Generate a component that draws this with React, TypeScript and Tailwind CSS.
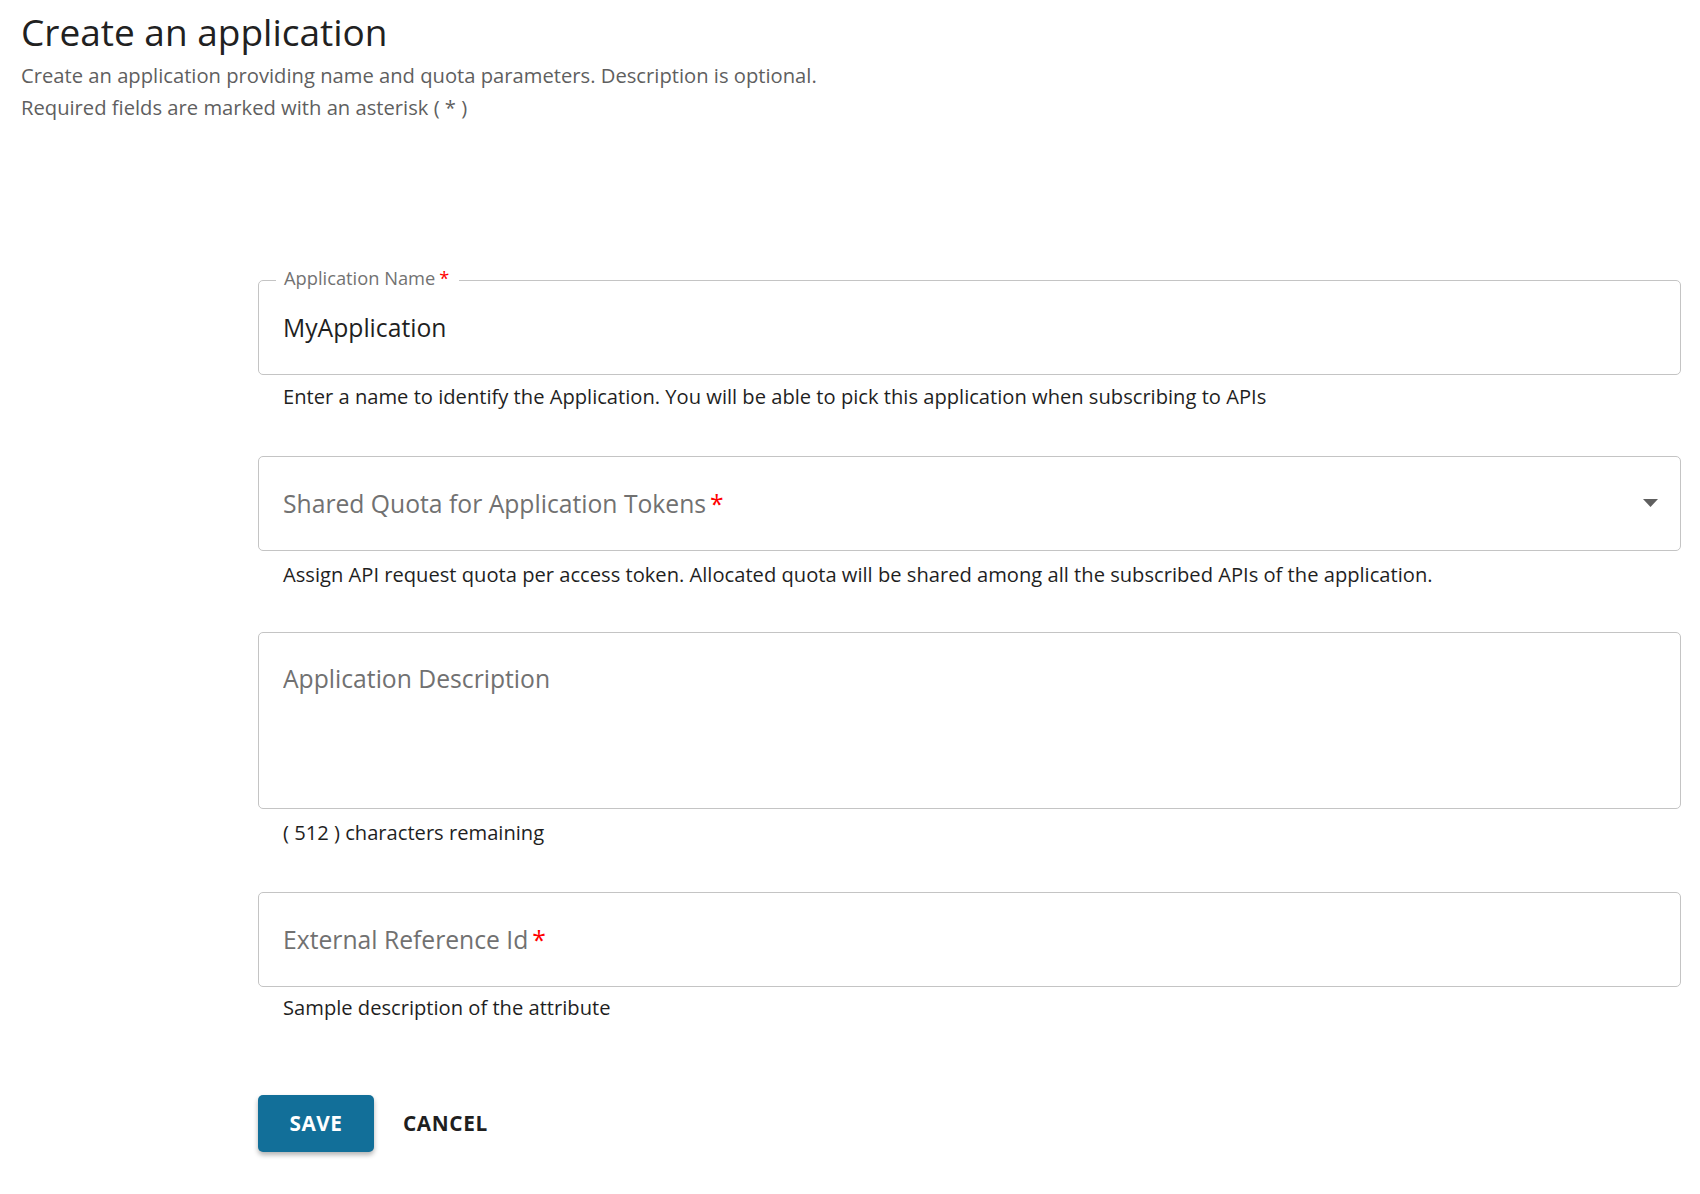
import { useState } from 'react'

const Star = () => <span className="text-[#ff0000] ml-[4px]">*</span>

interface HelperProps {
    children: React.ReactNode
    className?: string
}

const Helper = ({ children, className = '' }: HelperProps) => (
    <p className={`pl-[25px] text-[20.15px] leading-[26px] text-[#1f1f1f] ${className}`}>{children}</p>
)

const App = () => {
    const [name, setName] = useState('MyApplication')
    const [desc, setDesc] = useState('')
    const [extRef, setExtRef] = useState('')

    return (
        <div
            className="min-h-screen bg-white pl-[21px] pr-[19px] pt-[10px]"
            style={{ fontFamily: '"Open Sans", "Noto Sans", sans-serif' }}
        >
            {/* Header */}
            <h1 className="text-[37px] leading-[44px] text-[#212121] font-normal">Create an application</h1>
            <div className="mt-[5px] text-[20.2px] leading-[32px] text-[#5f5f5f]">
                <p>Create an application providing name and quota parameters. Description is optional.</p>
                <p>Required fields are marked with an asterisk ( * )</p>
            </div>

            {/* Form */}
            <div className="ml-[237px] mt-[157px]">
                {/* Application Name */}
                <div className="relative rounded-[5px] border border-[#c4c4c4] h-[95px] flex items-center px-[24px]">
                    <span className="absolute -top-[16px] left-[17px] bg-white pl-[8px] pr-[10px] text-[18.3px] leading-[26px] text-[#727272]">
                        Application Name
                        <Star />
                    </span>
                    <input
                        value={name}
                        onChange={(e) => setName(e.target.value)}
                        className="w-full outline-none text-[24.7px] leading-[34px] text-[#1f1f1f] bg-transparent"
                    />
                </div>
                <Helper className="mt-[8px]">
                    Enter a name to identify the Application. You will be able to pick this application when
                    subscribing to APIs
                </Helper>

                {/* Shared Quota */}
                <div className="mt-[47px] rounded-[5px] border border-[#c4c4c4] h-[95px] flex items-center justify-between pl-[24px] pr-[22px]">
                    <span className="text-[24.7px] leading-[34px] text-[#717171]">
                        Shared Quota for Application Tokens
                        <Star />
                    </span>
                    <svg width="15" height="8" viewBox="0 0 15 8" className="mt-[-2px]">
                        <path d="M0 0 L15 0 L7.5 8 Z" fill="#5f5f5f" />
                    </svg>
                </div>
                <Helper className="mt-[10px]">
                    Assign API request quota per access token. Allocated quota will be shared among all the
                    subscribed APIs of the application.
                </Helper>

                {/* Description */}
                <div className="mt-[45px] rounded-[5px] border border-[#c4c4c4] h-[177px] px-[24px] pt-[29px]">
                    <textarea
                        value={desc}
                        onChange={(e) => setDesc(e.target.value)}
                        placeholder="Application Description"
                        className="w-full h-[118px] resize-none outline-none text-[24.7px] leading-[34px] text-[#1f1f1f] placeholder:text-[#717171] bg-transparent"
                    />
                </div>
                <Helper className="mt-[10px]">( {512 - desc.length} ) characters remaining</Helper>

                {/* External Reference Id */}
                <div className="relative mt-[47px] rounded-[5px] border border-[#c4c4c4] h-[95px] flex items-center px-[24px]">
                    {extRef === '' && (
                        <span className="absolute left-[24px] text-[24.7px] leading-[34px] text-[#717171] pointer-events-none">
                            External Reference Id
                            <Star />
                        </span>
                    )}
                    <input
                        value={extRef}
                        onChange={(e) => setExtRef(e.target.value)}
                        className="w-full outline-none text-[24.7px] leading-[34px] text-[#1f1f1f] bg-transparent"
                    />
                </div>
                <Helper className="mt-[7px]">Sample description of the attribute</Helper>

                {/* Actions */}
                <div className="mt-[75px] flex items-center">
                    <button className="h-[57px] w-[116px] rounded-[5px] bg-[#126f99] text-white text-[20.8px] font-bold tracking-[0.5px] shadow-[0_3px_5px_rgba(0,0,0,0.3)]">
                        SAVE
                    </button>
                    <button className="h-[57px] px-[29px] text-[20.8px] font-bold tracking-[0.6px] text-[#1f1f1f]">
                        CANCEL
                    </button>
                </div>
            </div>
        </div>
    )
}

export default App
